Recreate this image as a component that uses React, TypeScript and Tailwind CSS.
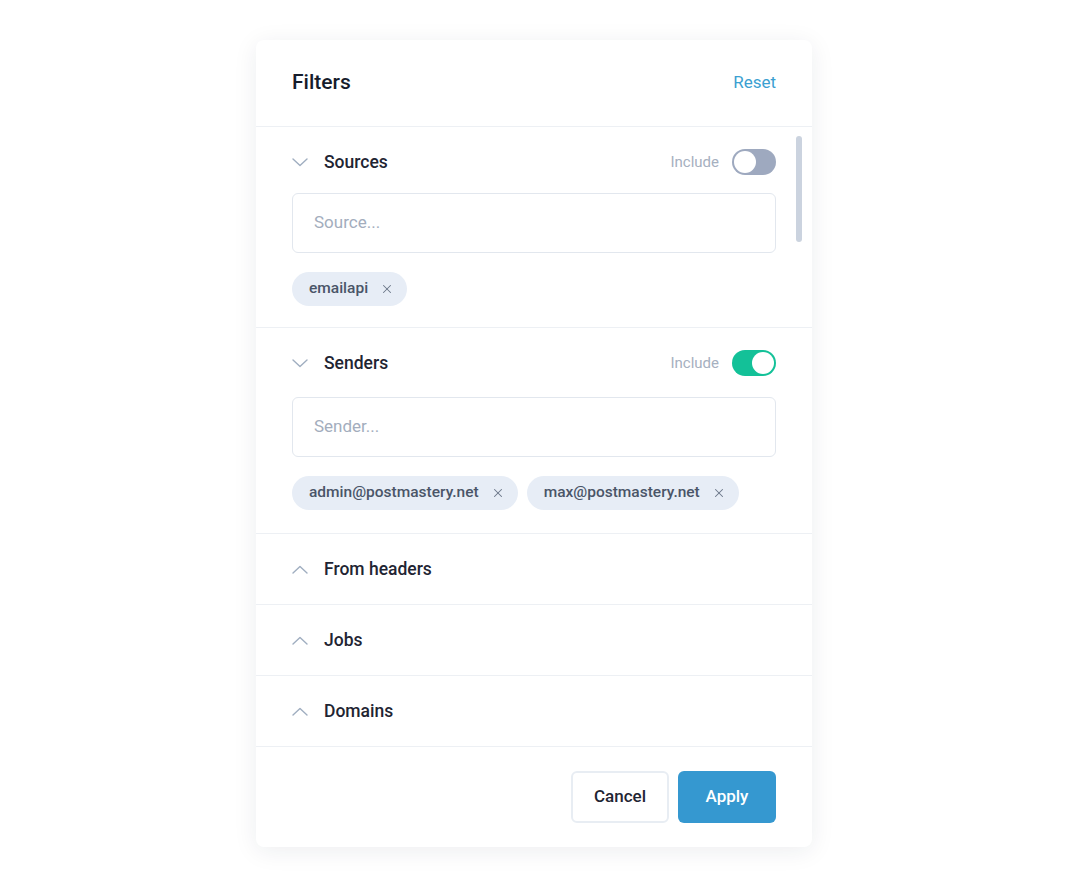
import { X } from "lucide-react";

// ─── Pieces ───────────────────────────────────────────────────

function Chevron({ up }: { up?: boolean }) {
  return (
    <svg width="16" height="9" viewBox="0 0 16 9" fill="none" className="shrink-0">
      <path
        d={up ? "M1 8L8 1.5L15 8" : "M1 1L8 7.5L15 1"}
        stroke="#a0aec0"
        strokeWidth="1.4"
        strokeLinecap="round"
        strokeLinejoin="round"
      />
    </svg>
  );
}

function Toggle({ on }: { on: boolean }) {
  return (
    <div
      className={
        "w-[44px] h-[26px] rounded-full p-[2px] flex items-center " +
        (on ? "bg-[#13c198] justify-end" : "bg-[#9ea9bf] justify-start")
      }
    >
      <div className="w-[22px] h-[22px] rounded-full bg-white" />
    </div>
  );
}

function Chip({ label }: { label: string }) {
  return (
    <span className="h-[34px] pl-[17px] pr-[13px] rounded-full bg-[#e7edf6] text-[#4a5568] text-[15.5px] font-medium flex items-center gap-3">
      {label}
      <X className="w-[14px] h-[14px] text-[#6b7689]" strokeWidth={1.75} />
    </span>
  );
}

function OpenSection({
  title,
  on,
  placeholder,
  chips,
  inputGap,
  bottom,
}: {
  title: string;
  on: boolean;
  placeholder: string;
  chips: string[];
  inputGap: string;
  bottom: string;
}) {
  return (
    <div className={"px-9 pt-[22px] border-b border-[#edf0f4] " + bottom}>
      <div className="h-[26px] flex items-center">
        <Chevron />
        <span className="ml-4 text-[17.5px] font-medium text-[#1f2533]">{title}</span>
        <span className="ml-auto mr-[13px] text-[15px] text-[#a6b0c0]">Include</span>
        <Toggle on={on} />
      </div>
      <div
        className={
          "h-[60px] rounded-md border border-[#e2e7ee] flex items-center px-[21px] text-[17px] text-[#a3adbd] " +
          inputGap
        }
      >
        {placeholder}
      </div>
      <div className="mt-[19px] flex gap-[9px]">
        {chips.map((c) => (
          <Chip key={c} label={c} />
        ))}
      </div>
    </div>
  );
}

function ClosedSection({ title }: { title: string }) {
  return (
    <div className="h-[71px] px-9 flex items-center border-b border-[#edf0f4]">
      <Chevron up />
      <span className="ml-4 text-[17.5px] font-medium text-[#1f2533]">{title}</span>
    </div>
  );
}

// ─── Main ─────────────────────────────────────────────────────

export default function App() {
  return (
    <div className="min-h-screen bg-white pt-[40px] font-['Roboto',sans-serif]">
      <div className="w-[556px] mx-auto bg-white rounded-lg shadow-[0_4px_24px_rgba(30,41,59,0.08)]">
        {/* Header */}
        <div className="h-[87px] px-9 flex items-center justify-between border-b border-[#edf0f4]">
          <h1 className="text-[21px] font-medium text-[#161c2b]">Filters</h1>
          <button className="text-[17px] text-[#3b9fd1]">Reset</button>
        </div>

        {/* Body */}
        <div className="relative">
          <OpenSection
            title="Sources"
            on={false}
            placeholder="Source..."
            chips={["emailapi"]}
            inputGap="mt-[18px]"
            bottom="pb-[21px]"
          />
          <OpenSection
            title="Senders"
            on={true}
            placeholder="Sender..."
            chips={["admin@postmastery.net", "max@postmastery.net"]}
            inputGap="mt-[21px]"
            bottom="pb-[23px]"
          />
          <ClosedSection title="From headers" />
          <ClosedSection title="Jobs" />
          <ClosedSection title="Domains" />

          {/* scrollbar */}
          <div className="absolute right-[10px] top-[9px] w-[6px] h-[106px] rounded-full bg-[#cbd3df]" />
        </div>

        {/* Footer */}
        <div className="px-9 py-6 flex justify-end gap-[9px]">
          <button className="w-[98px] h-[52px] rounded-md border-2 border-[#e8edf3] text-[17px] font-medium text-[#1f2533]">
            Cancel
          </button>
          <button className="w-[98px] h-[52px] rounded-md bg-[#3598d0] text-[17px] font-medium text-white">
            Apply
          </button>
        </div>
      </div>
    </div>
  );
}
